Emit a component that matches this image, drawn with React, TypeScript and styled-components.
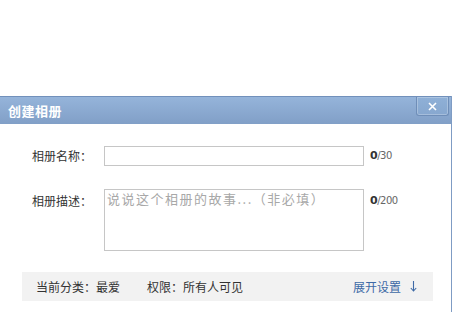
import React from "react";
import styled, { createGlobalStyle } from "styled-components";

const GlobalStyle = createGlobalStyle`
  html, body {
    margin: 0;
    padding: 0;
    background: #fff;
  }
  body {
    font-family: "Noto Sans CJK SC", "Liberation Sans", sans-serif;
    font-size: 12px;
    color: #333;
  }
`;

const Page = styled.div`
  padding-top: 96px;
  width: 456px;
  height: 312px;
  box-sizing: border-box;
  overflow: hidden;
`;

const Dialog = styled.div`
  width: 452px;
  box-sizing: border-box;
  border-right: 1px solid #7f9cc4;
  background: #fff;
  padding-bottom: 40px;
`;

const Header = styled.div`
  height: 28px;
  box-sizing: border-box;
  border-top: 1px solid #7190bb;
  background: linear-gradient(to bottom, #95b4da, #819fc7);
  display: flex;
  align-items: center;
  justify-content: space-between;
  padding: 0 2px 0 8px;
`;

const Title = styled.h2`
  margin: 0;
  font-size: 13px;
  font-weight: bold;
  color: #fff;
  letter-spacing: 0.5px;
`;

const CloseButton = styled.button`
  align-self: flex-start;
  width: 33px;
  height: 19px;
  padding: 0;
  border: 1px solid #6f8eb8;
  border-top: none;
  border-radius: 0 0 3px 3px;
  background: linear-gradient(to bottom, #8fb0d7, #87a7cf);
  box-shadow: inset 0 0 0 1px rgba(255, 255, 255, 0.25);
  display: flex;
  align-items: center;
  justify-content: center;
  cursor: pointer;
`;

const Form = styled.div`
  display: flex;
  flex-direction: column;
  gap: 23px;
  padding: 22px 0 0 32px;
`;

const Row = styled.div<{ $top?: boolean }>`
  display: flex;
  align-items: ${(p) => (p.$top ? "flex-start" : "center")};
  gap: 12px;
`;

const Label = styled.label<{ $top?: boolean }>`
  width: 60px;
  flex: none;
  color: #333;
  font-size: 12px;
  line-height: 20px;
  padding-top: ${(p) => (p.$top ? "2px" : "0")};
  white-space: nowrap;
`;

const Field = styled.div`
  display: flex;
  align-items: flex-start;
  gap: 6px;
`;

const TextInput = styled.input`
  width: 260px;
  height: 20px;
  box-sizing: border-box;
  border: 1px solid #c6c6c6;
  margin: 0;
  padding: 0 4px;
  font: inherit;
  outline: none;
`;

const TextArea = styled.textarea`
  width: 260px;
  height: 62px;
  box-sizing: border-box;
  border: 1px solid #c6c6c6;
  margin: 0;
  padding: 0 2px;
  font-family: "Noto Sans CJK SC", sans-serif;
  font-size: 13px;
  letter-spacing: 1.5px;
  line-height: 17px;
  resize: none;
  outline: none;
  &::placeholder {
    color: #a8a8a8;
  }
`;

const Counter = styled.span<{ $offset?: number }>`
  font-family: "DejaVu Sans", "Liberation Sans", sans-serif;
  font-size: 10px;
  color: #666;
  line-height: 20px;
  padding-top: ${(p) => p.$offset ?? 0}px;
  letter-spacing: -0.5px;
  b {
    color: #333;
    font-size: 11px;
  }
`;

const InfoBar = styled.div`
  margin: 21px 18px 0 22px;
  height: 29px;
  background: #f2f2f2;
  display: flex;
  align-items: center;
  padding: 0 16px 0 14px;
  font-size: 12px;
  color: #333;
`;

const InfoItem = styled.span`
  margin-right: 27px;
`;

const Expand = styled.a`
  margin-left: auto;
  color: #3e6aa6;
  text-decoration: none;
  display: flex;
  align-items: center;
  gap: 9px;
  cursor: pointer;
`;

export default function App() {
  return (
    <>
      <GlobalStyle />
      <Page>
        <Dialog>
          <Header>
            <Title>创建相册</Title>
            <CloseButton aria-label="关闭">
              <svg width="9" height="9" viewBox="0 0 9 9">
                <path d="M1 1L8 8M8 1L1 8" stroke="#fff" strokeWidth="1.6" />
              </svg>
            </CloseButton>
          </Header>
          <Form>
            <Row>
              <Label>相册名称：</Label>
              <Field>
                <TextInput />
                <Counter>
                  <b>0</b>/30
                </Counter>
              </Field>
            </Row>
            <Row $top>
              <Label $top>相册描述：</Label>
              <Field>
                <TextArea placeholder="说说这个相册的故事...（非必填）" />
                <Counter $offset={2}>
                  <b>0</b>/200
                </Counter>
              </Field>
            </Row>
          </Form>
          <InfoBar>
            <InfoItem>当前分类：最爱</InfoItem>
            <InfoItem>权限：所有人可见</InfoItem>
            <Expand>
              展开设置
              <svg width="7" height="11" viewBox="0 0 7 11">
                <path d="M3.5 0V10M0.8 7L3.5 10L6.2 7" stroke="#3e6aa6" strokeWidth="1.1" fill="none" />
              </svg>
            </Expand>
          </InfoBar>
        </Dialog>
      </Page>
    </>
  );
}
